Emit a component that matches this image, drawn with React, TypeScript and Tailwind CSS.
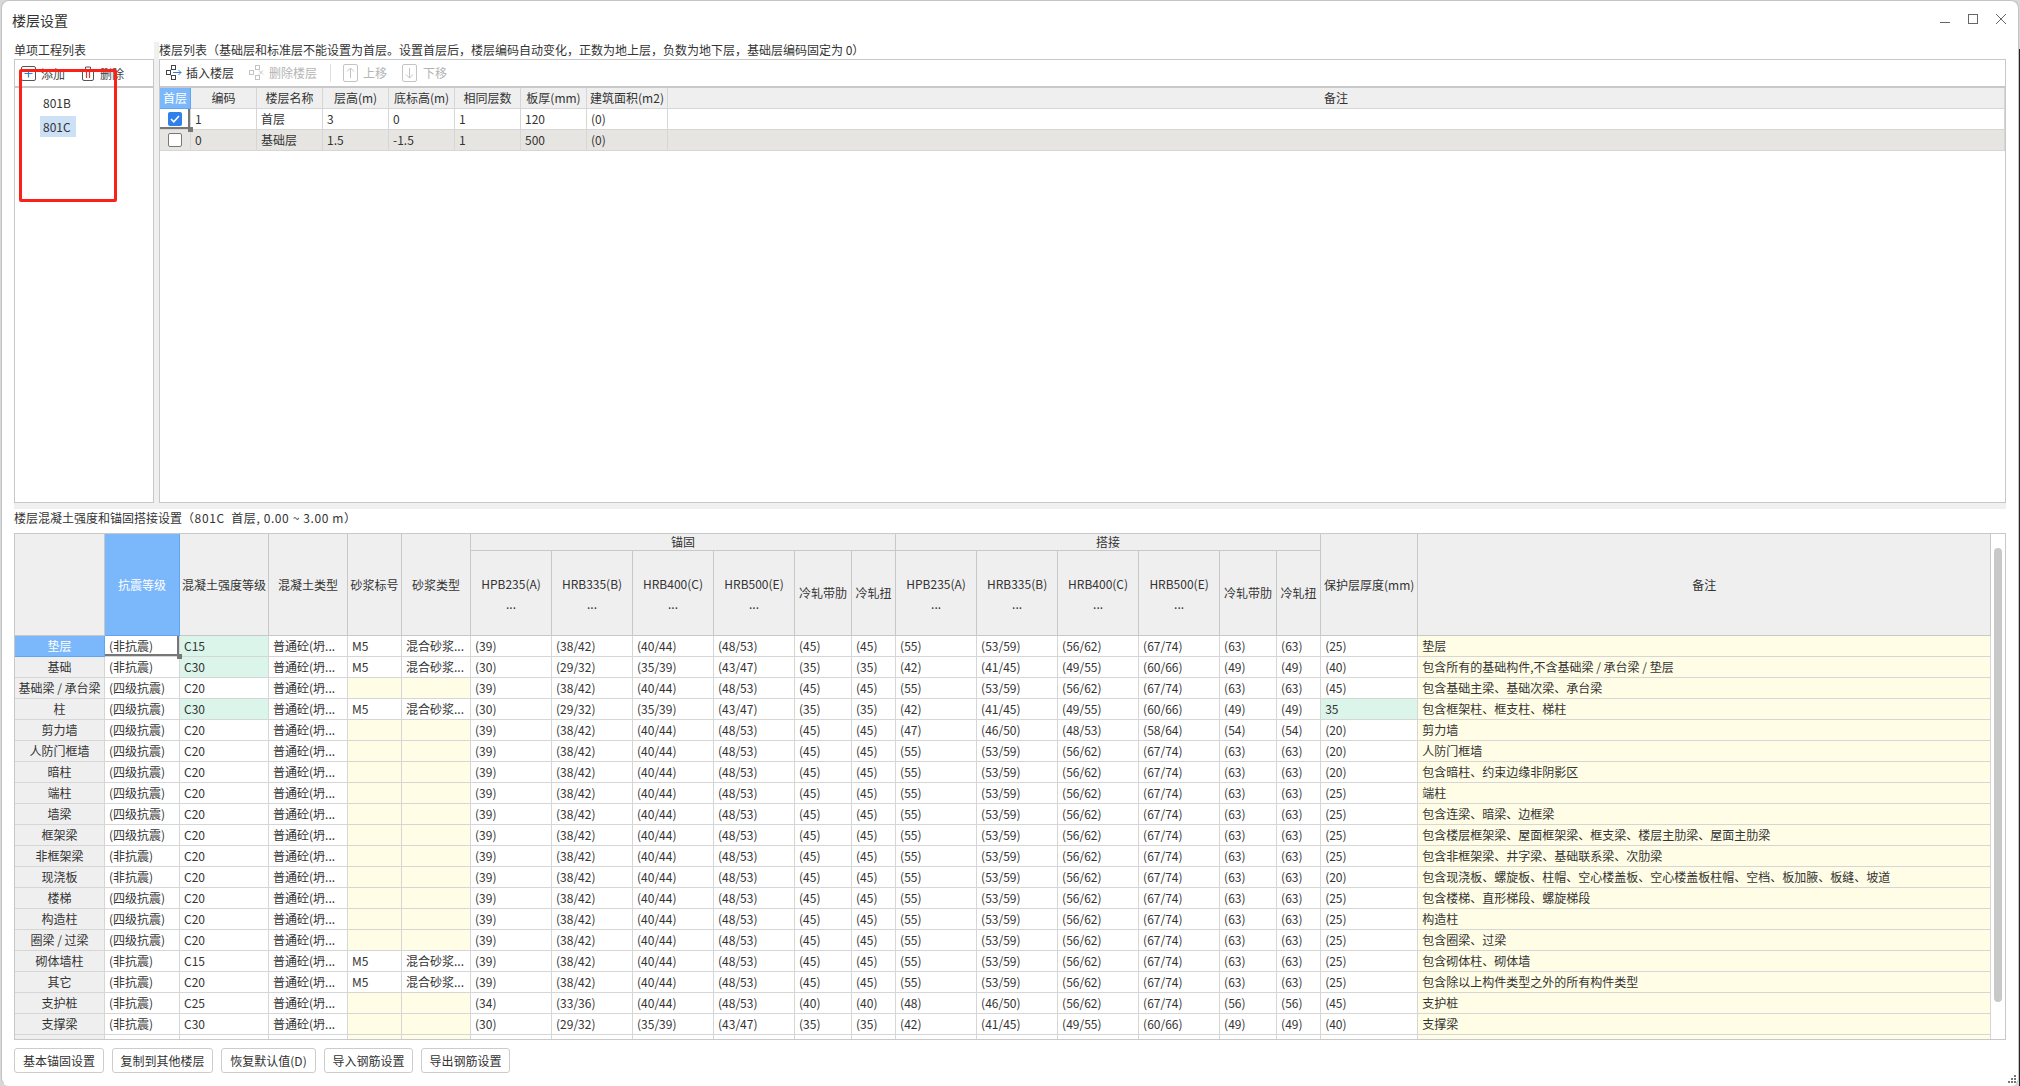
type Row = {
  name: string;
  seismic: string;
  grade: string;
  gradeGreen?: boolean;
  mortar?: boolean;
  anchor: string[];
  lap: string[];
  cover: string;
  coverGreen?: boolean;
  note: string;
};

const A39 = ['(39)', '(38/42)', '(40/44)', '(48/53)', '(45)', '(45)'];
const A30 = ['(30)', '(29/32)', '(35/39)', '(43/47)', '(35)', '(35)'];
const A34 = ['(34)', '(33/36)', '(40/44)', '(48/53)', '(40)', '(40)'];
const L55 = ['(55)', '(53/59)', '(56/62)', '(67/74)', '(63)', '(63)'];
const L42 = ['(42)', '(41/45)', '(49/55)', '(60/66)', '(49)', '(49)'];
const L47 = ['(47)', '(46/50)', '(48/53)', '(58/64)', '(54)', '(54)'];
const L48 = ['(48)', '(46/50)', '(56/62)', '(67/74)', '(56)', '(56)'];

const NONE = '(非抗震)';
const FOUR = '(四级抗震)';

const rows: Row[] = [
  { name: '垫层', seismic: NONE, grade: 'C15', gradeGreen: true, mortar: true, anchor: A39, lap: L55, cover: '(25)', note: '垫层' },
  { name: '基础', seismic: NONE, grade: 'C30', gradeGreen: true, mortar: true, anchor: A30, lap: L42, cover: '(40)', note: '包含所有的基础构件,不含基础梁 / 承台梁 / 垫层' },
  { name: '基础梁 / 承台梁', seismic: FOUR, grade: 'C20', anchor: A39, lap: L55, cover: '(45)', note: '包含基础主梁、基础次梁、承台梁' },
  { name: '柱', seismic: FOUR, grade: 'C30', gradeGreen: true, mortar: true, anchor: A30, lap: L42, cover: '35', coverGreen: true, note: '包含框架柱、框支柱、梯柱' },
  { name: '剪力墙', seismic: FOUR, grade: 'C20', anchor: A39, lap: L47, cover: '(20)', note: '剪力墙' },
  { name: '人防门框墙', seismic: FOUR, grade: 'C20', anchor: A39, lap: L55, cover: '(20)', note: '人防门框墙' },
  { name: '暗柱', seismic: FOUR, grade: 'C20', anchor: A39, lap: L55, cover: '(20)', note: '包含暗柱、约束边缘非阴影区' },
  { name: '端柱', seismic: FOUR, grade: 'C20', anchor: A39, lap: L55, cover: '(25)', note: '端柱' },
  { name: '墙梁', seismic: FOUR, grade: 'C20', anchor: A39, lap: L55, cover: '(25)', note: '包含连梁、暗梁、边框梁' },
  { name: '框架梁', seismic: FOUR, grade: 'C20', anchor: A39, lap: L55, cover: '(25)', note: '包含楼层框架梁、屋面框架梁、框支梁、楼层主肋梁、屋面主肋梁' },
  { name: '非框架梁', seismic: NONE, grade: 'C20', anchor: A39, lap: L55, cover: '(25)', note: '包含非框架梁、井字梁、基础联系梁、次肋梁' },
  { name: '现浇板', seismic: NONE, grade: 'C20', anchor: A39, lap: L55, cover: '(20)', note: '包含现浇板、螺旋板、柱帽、空心楼盖板、空心楼盖板柱帽、空档、板加腋、板缝、坡道' },
  { name: '楼梯', seismic: FOUR, grade: 'C20', anchor: A39, lap: L55, cover: '(25)', note: '包含楼梯、直形梯段、螺旋梯段' },
  { name: '构造柱', seismic: FOUR, grade: 'C20', anchor: A39, lap: L55, cover: '(25)', note: '构造柱' },
  { name: '圈梁 / 过梁', seismic: FOUR, grade: 'C20', anchor: A39, lap: L55, cover: '(25)', note: '包含圈梁、过梁' },
  { name: '砌体墙柱', seismic: NONE, grade: 'C15', mortar: true, anchor: A39, lap: L55, cover: '(25)', note: '包含砌体柱、砌体墙' },
  { name: '其它', seismic: NONE, grade: 'C20', mortar: true, anchor: A39, lap: L55, cover: '(25)', note: '包含除以上构件类型之外的所有构件类型' },
  { name: '支护桩', seismic: NONE, grade: 'C25', anchor: A34, lap: L48, cover: '(45)', note: '支护桩' },
  { name: '支撑梁', seismic: NONE, grade: 'C30', anchor: A30, lap: L42, cover: '(40)', note: '支撑梁' },
];

const floors = [
  { first: true, code: '1', name: '首层', height: '3', base: '0', same: '1', slab: '120', area: '(0)' },
  { first: false, code: '0', name: '基础层', height: '1.5', base: '-1.5', same: '1', slab: '500', area: '(0)' },
];

const upperCols = [31, 66, 66, 66, 66, 66, 66, 81, 1337];
const lowerCols = [90, 75, 89, 79, 54, 69, 81, 81, 81, 81, 57, 44, 81, 81, 81, 81, 57, 44, 97, 573];

const buttons = [
  { label: '基本锚固设置', width: 'w-[90px]' },
  { label: '复制到其他楼层', width: 'w-[101px]' },
  { label: '恢复默认值(D)', width: 'w-[95px]' },
  { label: '导入钢筋设置', width: 'w-[89px]' },
  { label: '导出钢筋设置', width: 'w-[89px]' },
];

const headCell = 'bg-[#efefef] border-r border-b border-[#c8c8c8] text-center font-normal p-0';
const bodyCell = 'border-r border-b border-[#d6d6d6] px-[4px] whitespace-nowrap overflow-hidden text-left font-normal';

// dark frame of the current cell, with the little drag handle at its corner
const SelectionMark = () => (
  <>
    <span className="absolute right-0 top-0 bottom-0 w-[2px] bg-[#777]" />
    <span className="absolute left-0 right-0 bottom-0 h-[2px] bg-[#777]" />
    <span className="absolute right-[-3px] bottom-[-3px] w-[5px] h-[5px] bg-[#777] z-10" />
  </>
);

const AddIcon = () => (
  <svg width="15" height="15" viewBox="0 0 15 15" fill="none">
    <rect x="0.5" y="0.5" width="14" height="14" rx="1.5" stroke="#555" />
    <path d="M7.5 3.5v8M3.5 7.5h8" stroke="#2f7fe0" strokeWidth="1.2" />
  </svg>
);

const TrashIcon = () => (
  <svg width="14" height="15" viewBox="0 0 14 15" fill="none">
    <rect x="1.5" y="3.5" width="11" height="11" rx="1.5" stroke="#555" />
    <path d="M0 3.5h14M4.5 3V1h5v2" stroke="#555" />
    <path d="M5.5 6v6M8.5 6v6" stroke="#d9382e" strokeWidth="1.2" />
  </svg>
);

const InsertIcon = () => (
  <svg width="16" height="16" viewBox="0 0 16 16" fill="none">
    <rect x="5.5" y="0.5" width="4" height="4" stroke="#444" />
    <rect x="0.5" y="5.5" width="4" height="4" stroke="#444" />
    <rect x="5.5" y="10.5" width="4" height="4" stroke="#444" />
    <path d="M5 4.5 4 5.5M5 10.5 4 9.5" stroke="#444" />
    <path d="M7 7.5h8M12.5 5l2.5 2.5L12.5 10" stroke="#2f7fe0" />
  </svg>
);

const RemoveFloorIcon = () => (
  <svg width="16" height="16" viewBox="0 0 16 16" fill="none">
    <rect x="6.5" y="0.5" width="4" height="4" stroke="#c4c4c4" />
    <rect x="0.5" y="5.5" width="4" height="4" stroke="#c4c4c4" />
    <rect x="6.5" y="10.5" width="4" height="4" stroke="#c4c4c4" />
    <path d="M10 5.5 14 9.5M14 5.5 10 9.5" stroke="#c4c4c4" />
  </svg>
);

const ArrowBoxIcon = ({ down }: { down?: boolean }) => (
  <svg width="15" height="18" viewBox="0 0 15 18" fill="none">
    <rect x="0.5" y="0.5" width="14" height="17" rx="1.5" stroke="#c4c4c4" />
    {down ? (
      <path d="M7.5 4v10M4 10.5 7.5 14 11 10.5" stroke="#c4c4c4" />
    ) : (
      <path d="M7.5 14V4M4 7.5 7.5 4 11 7.5" stroke="#c4c4c4" />
    )}
  </svg>
);

const WindowControls = () => (
  <div className="flex items-center gap-[18px] pr-[12px]">
    <svg width="10" height="10" viewBox="0 0 10 10" fill="none">
      <path d="M0 8.5h10" stroke="#666" />
    </svg>
    <svg width="10" height="10" viewBox="0 0 10 10" fill="none">
      <rect x="0.5" y="0.5" width="9" height="9" stroke="#666" />
    </svg>
    <svg width="10" height="10" viewBox="0 0 10 10" fill="none">
      <path d="M0 0 10 10M10 0 0 10" stroke="#666" />
    </svg>
  </div>
);

const Checkbox = ({ checked }: { checked: boolean }) =>
  checked ? (
    <span className="w-[14px] h-[14px] rounded-[2px] bg-[#2f80e8] flex items-center justify-center">
      <svg width="10" height="8" viewBox="0 0 10 8" fill="none">
        <path d="M1 4 3.8 6.8 9 1" stroke="#fff" strokeWidth="1.6" />
      </svg>
    </span>
  ) : (
    <span className="w-[14px] h-[14px] rounded-[2px] bg-white border border-[#777]" />
  );

const FloorTable = () => (
  <table className="table-fixed border-separate border-spacing-0 w-[1845px]">
    <colgroup>
      {upperCols.map((w, i) => (
        <col key={i} span={1} style={{ width: w }} />
      ))}
    </colgroup>
    <thead>
      <tr className="h-[21px]">
        <th className="bg-[#7bb7fb] border-r border-b border-[#5fa5f0] text-white text-center font-normal p-0">首层</th>
        {['编码', '楼层名称', '层高(m)', '底标高(m)', '相同层数', '板厚(mm)', '建筑面积(m2)', '备注'].map((t) => (
          <th key={t} className="bg-[#efefef] border-r border-b border-[#d6d6d6] text-center font-normal p-0 whitespace-nowrap">
            {t}
          </th>
        ))}
      </tr>
    </thead>
    <tbody>
      {floors.map((f) => {
        const rowBg = f.first ? 'bg-white' : 'bg-[#e6e5e1]';
        return (
          <tr key={f.code} className="h-[21px]">
            <td className={`relative p-0 border-r border-b border-[#d6d6d6] ${rowBg}`}>
              <div className="flex items-center justify-center">
                <Checkbox checked={f.first} />
              </div>
              {f.first && <SelectionMark />}
            </td>
            {[f.code, f.name, f.height, f.base, f.same, f.slab, f.area, ''].map((v, i) => (
              <td key={i} className={`${bodyCell} ${rowBg}`}>
                {v}
              </td>
            ))}
          </tr>
        );
      })}
    </tbody>
  </table>
);

const SteelHead = ({ label }: { label: string }) => (
  <th className={`${headCell} leading-[20px] pt-[2px]`}>
    <div>{label}</div>
    <div>...</div>
  </th>
);

const SteelHeads = () => (
  <>
    {['HPB235(A)', 'HRB335(B)', 'HRB400(C)', 'HRB500(E)'].map((s) => (
      <SteelHead key={s} label={s} />
    ))}
    <th className={headCell}>冷轧带肋</th>
    <th className={headCell}>冷轧扭</th>
  </>
);

const ConcreteTable = () => (
  <table className="table-fixed border-separate border-spacing-0 w-[1976px] shrink-0">
    <colgroup>
      {lowerCols.map((w, i) => (
        <col key={i} span={1} style={{ width: w }} />
      ))}
    </colgroup>
    <thead>
      <tr className="h-[17px]">
        <th rowSpan={2} className={headCell} />
        <th rowSpan={2} className="bg-[#7bb7fb] border-r border-b border-[#5fa5f0] text-white text-center font-normal p-0">
          抗震等级
        </th>
        <th rowSpan={2} className={headCell}>混凝土强度等级</th>
        <th rowSpan={2} className={headCell}>混凝土类型</th>
        <th rowSpan={2} className={headCell}>砂浆标号</th>
        <th rowSpan={2} className={headCell}>砂浆类型</th>
        <th colSpan={6} className={headCell}>锚固</th>
        <th colSpan={6} className={headCell}>搭接</th>
        <th rowSpan={2} className={`${headCell} whitespace-nowrap`}>保护层厚度(mm)</th>
        <th rowSpan={2} className={headCell}>备注</th>
      </tr>
      <tr className="h-[85px]">
        <SteelHeads />
        <SteelHeads />
      </tr>
    </thead>
    <tbody>
      {rows.map((r, idx) => {
        const mortarCls = r.mortar ? '' : 'bg-[#fffde6]';
        return (
          <tr key={r.name} className="h-[21px]">
            <td
              className={
                idx === 0
                  ? 'bg-[#7bb7fb] border-r border-b border-[#5fa5f0] text-white text-center p-0'
                  : 'bg-[#efefef] border-r border-b border-[#d6d6d6] text-center p-0 whitespace-nowrap'
              }
            >
              {r.name}
            </td>
            <td className={`${bodyCell} ${idx === 0 ? 'relative overflow-visible' : ''}`}>
              {r.seismic}
              {idx === 0 && <SelectionMark />}
            </td>
            <td className={`${bodyCell} ${r.gradeGreen ? 'bg-[#dcf5ea]' : ''}`}>{r.grade}</td>
            <td className={bodyCell}>普通砼(坍...</td>
            <td className={`${bodyCell} ${mortarCls}`}>{r.mortar ? 'M5' : ''}</td>
            <td className={`${bodyCell} ${mortarCls}`}>{r.mortar ? '混合砂浆...' : ''}</td>
            {r.anchor.map((v, i) => (
              <td key={`a${i}`} className={bodyCell}>{v}</td>
            ))}
            {r.lap.map((v, i) => (
              <td key={`l${i}`} className={bodyCell}>{v}</td>
            ))}
            <td className={`${bodyCell} ${r.coverGreen ? 'bg-[#dcf5ea]' : ''}`}>{r.cover}</td>
            <td className={`${bodyCell} bg-[#fffde6]`}>{r.note}</td>
          </tr>
        );
      })}
      {/* next row, cut off by the bottom of the grid */}
      <tr className="h-[21px]">
        {lowerCols.map((_, i) => (
          <td
            key={i}
            className={`border-r border-[#d6d6d6] ${i === 0 ? 'bg-[#efefef]' : ''} ${
              i === 4 || i === 5 || i === 19 ? 'bg-[#fffde6]' : ''
            }`}
          />
        ))}
      </tr>
    </tbody>
  </table>
);

export default function App() {
  return (
    <div className="flex w-[2020px] h-[1086px] overflow-hidden bg-[#d8d8d8] text-[12px] leading-[16px] text-[#333] font-['Noto_Sans_CJK_SC',sans-serif]">
      <div className="relative flex flex-col w-[2018px] h-[1086px] ml-px shrink-0 bg-white border border-[#c4c4c4] border-b-white rounded-[8px] overflow-hidden">
        {/* title bar */}
        <div className="flex items-center justify-between h-[41px] shrink-0 pl-[10px] pb-[5px]">
          <span className="text-[14px] pt-[2px]">楼层设置</span>
          <WindowControls />
        </div>

        {/* upper panels */}
        <div className="flex h-[461px] shrink-0 px-[12px]">
          <div className="flex flex-col w-[140px] shrink-0">
            <div className="h-[17px] leading-[15px]">单项工程列表</div>
            <div className="relative flex-1 border border-[#c8c8c8]">
              <div className="flex items-center h-[28px] border-b-2 border-[#c8c8c8] pl-[6px] text-[#444]">
                <AddIcon />
                <span className="ml-[5px] pt-[2px]">添加</span>
                <span className="ml-[16px]">
                  <TrashIcon />
                </span>
                <span className="ml-[5px] pt-[2px]">删除</span>
              </div>
              <div className="flex flex-col items-start gap-[3px] pt-[4px] pl-[25px]">
                <div className="h-[21px] leading-[21px] px-[3px]">801B</div>
                <div className="h-[21px] leading-[21px] px-[3px] w-[36px] bg-[#cce0f6]">801C</div>
              </div>
              {/* red marker drawn over the screenshot */}
              <div className="absolute left-[4px] top-[9px] w-[98px] h-[133px] border-[3px] border-[#fa2118] rounded-[2px]" />
            </div>
          </div>
          <div className="w-[5px] shrink-0 bg-[#f0f0f0]" />
          <div className="flex flex-col flex-1 min-w-0">
            <div className="h-[17px] leading-[15px] whitespace-nowrap">
              楼层列表（基础层和标准层不能设置为首层。设置首层后，楼层编码自动变化，正数为地上层，负数为地下层，基础层编码固定为 0）
            </div>
            <div className="flex-1 border border-[#c8c8c8]">
              <div className="flex items-center h-[28px] border-b-2 border-[#c8c8c8] pl-[6px]">
                <InsertIcon />
                <span className="ml-[4px]">插入楼层</span>
                <span className="ml-[15px]">
                  <RemoveFloorIcon />
                </span>
                <span className="ml-[4px] text-[#b4b4b4]">删除楼层</span>
                <span className="ml-[13px] w-px h-[18px] bg-[#e0e0e0]" />
                <span className="ml-[12px]">
                  <ArrowBoxIcon />
                </span>
                <span className="ml-[5px] text-[#b4b4b4]">上移</span>
                <span className="ml-[15px]">
                  <ArrowBoxIcon down />
                </span>
                <span className="ml-[6px] text-[#b4b4b4]">下移</span>
              </div>
              <FloorTable />
            </div>
          </div>
        </div>

        <div className="h-[6px] shrink-0 mx-[12px] bg-[#f0f0f0]" />
        <div className="flex items-center h-[24px] shrink-0 px-[12px] pb-[6px] whitespace-pre">
          楼层混凝土强度和锚固搭接设置<span className="tracking-[0.6px]">（801C  首层, 0.00 ~ 3.00 m）</span>
        </div>

        {/* concrete / anchorage grid */}
        <div className="flex items-start h-[507px] w-[1992px] shrink-0 ml-[12px] border border-[#c8c8c8] overflow-hidden">
          <ConcreteTable />
          <div className="w-[8px] h-[454px] ml-[3px] mt-[14px] shrink-0 rounded-full bg-[#c8c8c8]" />
        </div>

        <div className="flex gap-[8px] mt-[8px] px-[12px]">
          {buttons.map((b) => (
            <button
              key={b.label}
              className={`${b.width} h-[25px] whitespace-nowrap bg-white border border-[#ccc] rounded-[3px] text-[#333]`}
            >
              {b.label}
            </button>
          ))}
        </div>

        {/* resize grip */}
        <svg className="absolute right-[1px] bottom-[1px]" width="10" height="10" viewBox="0 0 10 10" fill="#777">
          <rect x="7" y="1" width="2" height="2" />
          <rect x="4" y="4" width="2" height="2" />
          <rect x="7" y="4" width="2" height="2" />
          <rect x="1" y="7" width="2" height="2" />
          <rect x="4" y="7" width="2" height="2" />
          <rect x="7" y="7" width="2" height="2" />
        </svg>
      </div>
      <div className="w-px mt-[49px] bg-[#222] shrink-0" />
    </div>
  );
}
